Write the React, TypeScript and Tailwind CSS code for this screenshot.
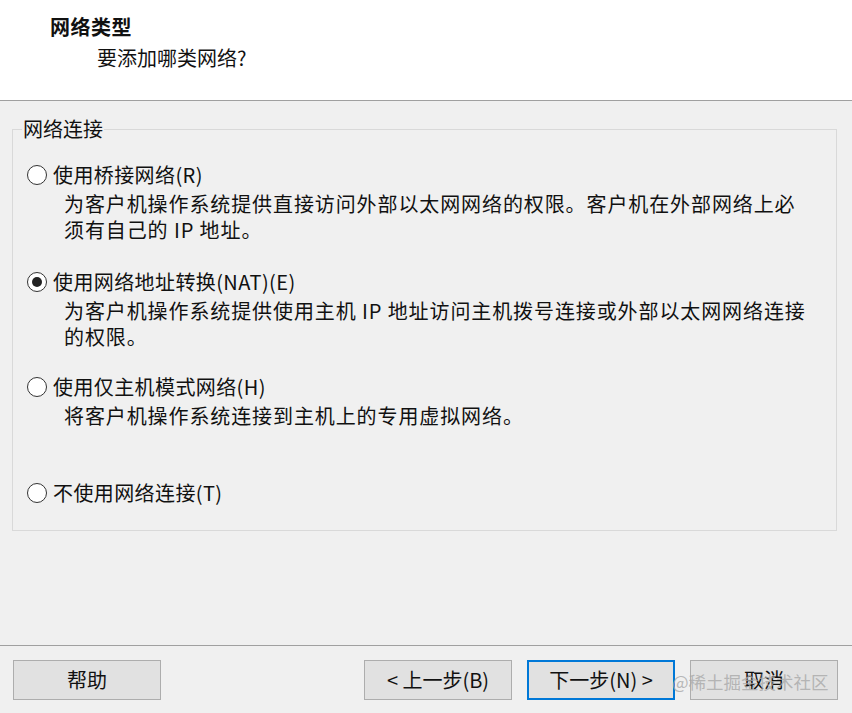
import React, { useState } from 'react';

const FONT = '"Noto Sans CJK SC", "Noto Sans", sans-serif';

interface Option {
  id: string;
  label: string;
  lines: string[];
  labelTop: string;
}

const OPTIONS: Option[] = [
  {
    id: 'bridge',
    label: '使用桥接网络(R)',
    lines: ['为客户机操作系统提供直接访问外部以太网网络的权限。客户机在外部网络上必', '须有自己的 IP 地址。'],
    labelTop: 'mt-[22px]',
  },
  {
    id: 'nat',
    label: '使用网络地址转换(NAT)(E)',
    lines: ['为客户机操作系统提供使用主机 IP 地址访问主机拨号连接或外部以太网网络连接', '的权限。'],
    labelTop: 'mt-[26px]',
  },
  {
    id: 'host',
    label: '使用仅主机模式网络(H)',
    lines: ['将客户机操作系统连接到主机上的专用虚拟网络。'],
    labelTop: 'mt-[24px]',
  },
  {
    id: 'none',
    label: '不使用网络连接(T)',
    lines: [],
    labelTop: 'mt-[51px]',
  },
];

function Radio({ checked }: { checked: boolean }) {
  return (
    <span className="flex h-[20px] w-[20px] shrink-0 items-center justify-center rounded-full border-[1.5px] border-[#333] bg-white">
      {checked && <span className="h-[10px] w-[10px] rounded-full bg-[#222]" />}
    </span>
  );
}

function DialogButton({ children, focused = false }: { children: React.ReactNode; focused?: boolean }) {
  return (
    <button
      className={`flex h-[40px] w-[148px] items-center justify-center bg-[#e1e1e1] text-[20px] text-[#111] ${
        focused ? 'border-2 border-[#0078d7]' : 'border border-[#adadad]'
      }`}
    >
      {children}
    </button>
  );
}

export default function App() {
  const [selected, setSelected] = useState('nat');

  return (
    <div className="relative flex h-[713px] w-[852px] flex-col bg-[#f0f0f0] text-[#111]" style={{ fontFamily: FONT }}>
      {/* Header */}
      <div className="h-[101px] shrink-0 border-b border-[#a0a0a0] bg-white">
        <div className="pl-[50px] pt-[14px] text-[20px] font-bold leading-[26px] tracking-[0.5px]">网络类型</div>
        <div className="pl-[97px] pt-[5px] text-[20px] leading-[26px]">要添加哪类网络?</div>
      </div>

      {/* Body */}
      <div className="flex-1 pt-[17px]">
        <fieldset className="ml-[12px] mr-[15px] border border-[#d9d9d9] pb-[24px] pl-[14px]">
          <legend className="ml-[-5px] px-[1px] text-[20px] leading-[22px]">网络连接</legend>
          {OPTIONS.map((opt) => (
            <div key={opt.id} className={opt.labelTop}>
              <label className="flex cursor-default items-center gap-[6px]" onClick={() => setSelected(opt.id)}>
                <Radio checked={selected === opt.id} />
                <span className="text-[20px] leading-[26px] tracking-[0.4px]">{opt.label}</span>
              </label>
              {opt.lines.length > 0 && (
                <div className="mt-[3px] pl-[37px] text-[20px] leading-[26px] tracking-[0.9px]">
                  {opt.lines.map((line) => (
                    <div key={line} className="whitespace-nowrap">
                      {line}
                    </div>
                  ))}
                </div>
              )}
            </div>
          ))}
        </fieldset>
      </div>

      {/* Footer */}
      <div className="flex h-[68px] shrink-0 items-start border-t border-[#a0a0a0] pt-[14px]">
        <div className="ml-[13px]">
          <DialogButton>帮助</DialogButton>
        </div>
        <div className="ml-auto mr-[14px] flex gap-[15px]">
          <DialogButton>&lt; 上一步(B)</DialogButton>
          <DialogButton focused>下一步(N) &gt;</DialogButton>
          <DialogButton>取消</DialogButton>
        </div>
      </div>

      {/* Watermark */}
      <div className="pointer-events-none absolute left-[672px] top-[669px] text-[17.5px] leading-[26px] text-[#a8a8a8]/80">
        @稀土掘金技术社区
      </div>
    </div>
  );
}
